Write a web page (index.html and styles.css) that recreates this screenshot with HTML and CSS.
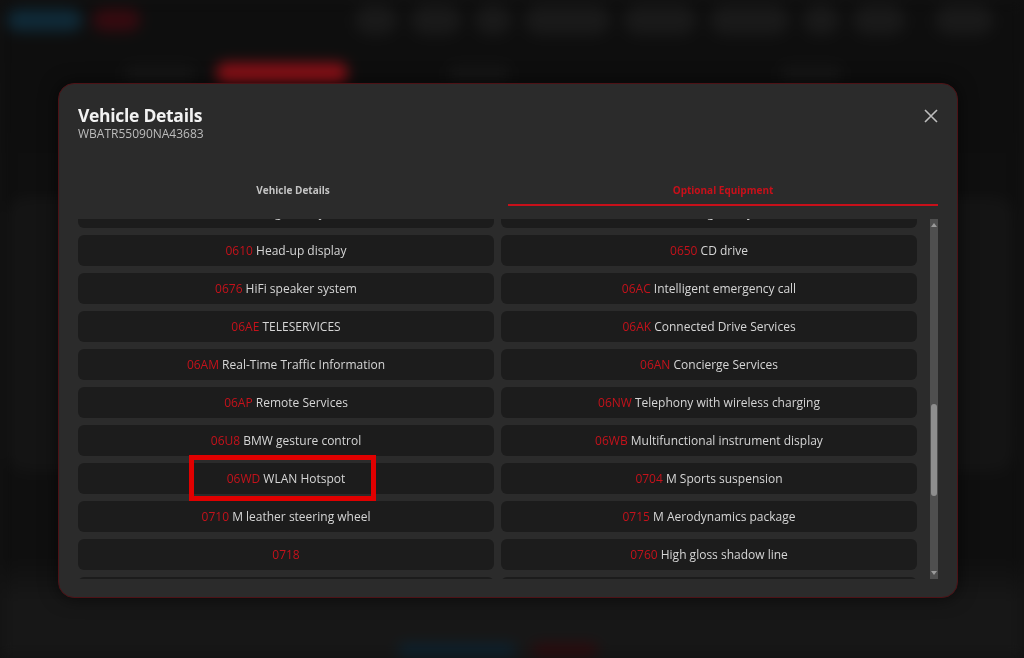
FILE: index.html
```html
<!DOCTYPE html>
<html lang="en">
<head>
<meta charset="utf-8">
<title>Vehicle Details</title>
<link rel="stylesheet" href="styles.css">
</head>
<body>
<div class="backdrop">
  <header class="topbar">
    <div class="brand"><span class="blob blue"></span><span class="blob red"></span></div>
    <nav class="navicons">
      <span class="ic w42"></span><span class="ic w50"></span><span class="ic w36"></span><span class="ic w85"></span><span class="ic w72"></span><span class="ic w79"></span><span class="ic w36"></span><span class="ic w52"></span><span class="ic w58 far"></span>
    </nav>
  </header>
  <div class="toolbar">
    <span class="ghost"></span><span class="redbtn"></span><span class="ghost small"></span><span class="ghost mid"></span>
  </div>
  <section class="bgcard"></section>
  <footer class="bgfoot"><span class="blob blue"></span><span class="blob red"></span></footer>
</div>

<div class="overlay">
  <div class="modal">
    <div class="modal-head">
      <div>
        <h2 class="title">Vehicle Details</h2>
        <div class="vin">WBATR55090NA43683</div>
      </div>
      <button class="close" aria-label="Close">
        <svg width="14" height="14" viewBox="0 0 14 14"><path d="M1 1L13 13M13 1L1 13" stroke="#bdbdbd" stroke-width="1.6" fill="none"/></svg>
      </button>
    </div>
    <div class="tabs">
      <div class="tab">Vehicle Details</div>
      <div class="tab active">Optional Equipment</div>
    </div>
    <div class="listwrap">
      <div class="viewport">
        <div class="grid">
          <div class="row"><span class="code">0609</span> Navigation system</div>
          <div class="row"><span class="code">0654</span> Digital key</div>
          <div class="row"><span class="code">0610</span> Head-up display</div>
          <div class="row"><span class="code">0650</span> CD drive</div>
          <div class="row"><span class="code">0676</span> HiFi speaker system</div>
          <div class="row"><span class="code">06AC</span> Intelligent emergency call</div>
          <div class="row"><span class="code">06AE</span> TELESERVICES</div>
          <div class="row"><span class="code">06AK</span> Connected Drive Services</div>
          <div class="row"><span class="code">06AM</span> Real-Time Traffic Information</div>
          <div class="row"><span class="code">06AN</span> Concierge Services</div>
          <div class="row"><span class="code">06AP</span> Remote Services</div>
          <div class="row"><span class="code">06NW</span> Telephony with wireless charging</div>
          <div class="row"><span class="code">06U8</span> BMW gesture control</div>
          <div class="row"><span class="code">06WB</span> Multifunctional instrument display</div>
          <div class="row"><span class="code">06WD</span> WLAN Hotspot</div>
          <div class="row"><span class="code">0704</span> M Sports suspension</div>
          <div class="row"><span class="code">0710</span> M leather steering wheel</div>
          <div class="row"><span class="code">0715</span> M Aerodynamics package</div>
          <div class="row"><span class="code">0718</span></div>
          <div class="row"><span class="code">0760</span> High gloss shadow line</div>
          <div class="row"><span class="code">0775</span> Headliner anthracite</div>
          <div class="row"><span class="code">07M9</span> M Shadow Line</div>
        </div>
        <div class="mark"></div>
      </div>
      <div class="scrollbar">
        <span class="arrow up"></span>
        <div class="track"><div class="thumb"></div></div>
        <span class="arrow down"></span>
      </div>
    </div>
  </div>
</div>
</body>
</html>
```
FILE: styles.css
```css
* { box-sizing: border-box; }
html, body { margin: 0; height: 100%; }
body {
  background: #111111;
  font-family: "Open Sans", "Noto Sans", sans-serif;
  overflow: hidden;
}

/* blurred page behind the dialog */
.backdrop {
  height: 658px;
  display: flex;
  flex-direction: column;
  filter: blur(7px);
  background: linear-gradient(#0e0e0e 0, #0f0f0f 560px, #171717 600px, #171717 100%);
}
.topbar {
  height: 40px;
  display: flex;
  align-items: center;
  justify-content: space-between;
  padding: 0 31px 0 7px;
}
.brand { display: flex; gap: 11px; align-items: center; }
.blob { display: block; border-radius: 12px; }
.brand .blue { width: 75px; height: 22px; background: #0f2a38; }
.brand .red { width: 47px; height: 22px; background: #360a0f; }
.navicons { display: flex; gap: 14px; align-items: center; }
.ic { height: 30px; border-radius: 15px; background: #191919; }
.w36 { width: 36px; }
.w42 { width: 42px; }
.w50 { width: 50px; }
.w52 { width: 52px; }
.w58 { width: 58px; }
.w72 { width: 72px; }
.w79 { width: 79px; }
.w85 { width: 85px; }
.ic.far { margin-left: 16px; }
.toolbar {
  height: 50px;
  display: flex;
  align-items: center;
  gap: 22px;
  padding: 18px 0 0 125px;
}
.ghost { width: 70px; height: 18px; border-radius: 6px; background: #151515; }
.ghost.small { width: 60px; margin-left: 80px; }
.ghost.mid { width: 60px; margin-left: 250px; }
.redbtn { width: 130px; height: 22px; border-radius: 8px; background: #8a1017; }
.bgcard {
  margin: 108px 12px 0 8px;
  height: 272px;
  border-radius: 18px;
  background: #141414;
  border: 2px solid #191919;
}
.bgfoot {
  margin-top: auto;
  height: 14px;
  display: flex;
  justify-content: center;
  gap: 16px;
  padding-right: 28px;
}
.bgfoot .blue { width: 118px; height: 12px; background: #0c2230; }
.bgfoot .red { width: 66px; height: 12px; background: #2e0a0d; }

/* dialog */
.overlay {
  position: fixed;
  inset: 0;
  padding: 83px 0 0 58px;
}
.modal {
  width: 900px;
  height: 515px;
  background: #2b2b2b;
  border: 1px solid #4d1216;
  border-radius: 16px;
  padding: 0 19px;
  display: flex;
  flex-direction: column;
  box-shadow: 0 0 18px rgba(0, 0, 0, 0.6);
}
.modal-head {
  display: flex;
  justify-content: space-between;
  align-items: flex-start;
  padding-top: 19px;
  height: 91px;
}
.title {
  margin: 0;
  font-size: 17.5px;
  line-height: 24px;
  font-weight: 700;
  color: #f2f2f2;
  letter-spacing: -0.3px;
}
.vin {
  font-size: 12px;
  line-height: 16px;
  color: #bdbdbd;
  margin-top: -1px;
}
.close {
  background: none;
  border: 0;
  padding: 0;
  margin-top: 6px;
  width: 14px;
  height: 14px;
  display: flex;
  cursor: pointer;
}
.tabs {
  display: grid;
  grid-template-columns: 1fr 1fr;
  height: 31px;
}
.tab {
  display: flex;
  align-items: center;
  justify-content: center;
  font-size: 10px;
  font-weight: 700;
  color: #c4c4c4;
  padding-bottom: 2px;
}
.tab.active {
  color: #c8101a;
  border-bottom: 2px solid #c8101a;
  padding-bottom: 0;
}
.listwrap {
  margin-top: 13px;
  height: 360px;
  display: flex;
  gap: 13px;
}
.viewport {
  position: relative;
  width: 839px;
  height: 360px;
  overflow: hidden;
}
.grid {
  display: grid;
  grid-template-columns: 416px 416px;
  column-gap: 7px;
  row-gap: 7px;
  grid-auto-rows: 31px;
  margin-top: -22px;
}
.row {
  background: #1c1c1c;
  border-radius: 6px;
  display: flex;
  align-items: center;
  justify-content: center;
  font-size: 12px;
  color: #d6d6d6;
  white-space: pre;
}
.code { color: #c4121b; }
.mark {
  position: absolute;
  left: 111px;
  top: 236px;
  width: 187px;
  height: 46px;
  border: 5px solid #e00000;
}
.scrollbar {
  width: 8px;
  height: 360px;
  background: #4f4f4f;
  display: flex;
  flex-direction: column;
  align-items: center;
}
.arrow {
  width: 0;
  height: 0;
  border-left: 3px solid transparent;
  border-right: 3px solid transparent;
  margin: 4px 0;
}
.arrow.up { border-bottom: 4px solid #9a9a9a; }
.arrow.down { border-top: 4px solid #9a9a9a; }
.track { flex: 1; width: 100%; }
.thumb {
  width: 6px;
  margin: 173px auto 0;
  height: 92px;
  border-radius: 3px;
  background: #8e8e8e;
}
```
